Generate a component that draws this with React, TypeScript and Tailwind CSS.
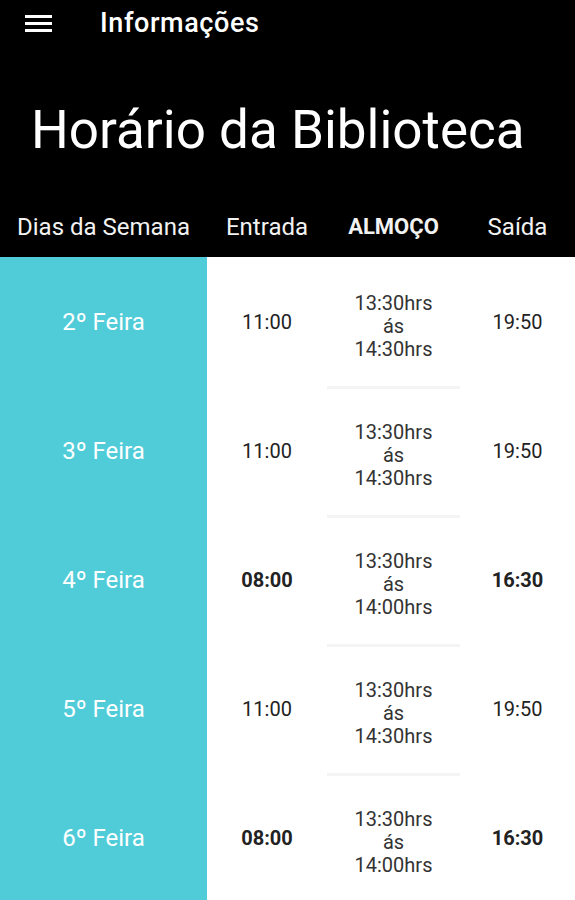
import React from "react";

const rows = [
  { dia: "2º Feira", entrada: "11:00", fim: "14:30hrs", saida: "19:50", bold: false },
  { dia: "3º Feira", entrada: "11:00", fim: "14:30hrs", saida: "19:50", bold: false },
  { dia: "4º Feira", entrada: "08:00", fim: "14:00hrs", saida: "16:30", bold: true },
  { dia: "5º Feira", entrada: "11:00", fim: "14:30hrs", saida: "19:50", bold: false },
  { dia: "6º Feira", entrada: "08:00", fim: "14:00hrs", saida: "16:30", bold: true },
];

export default function App() {
  return (
    <div className="w-[575px] h-[900px] overflow-hidden bg-white flex flex-col" style={{ fontFamily: "Roboto, 'Liberation Sans', sans-serif" }}>
      <div className="bg-black text-white shrink-0">
        <div className="h-[46px] flex items-center">
          <div className="w-[100px] pl-[25px]">
            <svg width="28" height="18" viewBox="0 0 28 18">
              <rect x="0" y="1" width="27" height="3" fill="#fff" />
              <rect x="0" y="8" width="27" height="3" fill="#fff" />
              <rect x="0" y="15" width="27" height="3" fill="#fff" />
            </svg>
          </div>
          <span className="text-[27px] font-medium tracking-[0.6px]">Informações</span>
        </div>
        <div className="h-[158px] flex items-center pl-[31px] pt-[10px]">
          <h1 className="text-[53px] leading-none">Horário da Biblioteca</h1>
        </div>
        <div className="h-[53px] flex items-start pt-[5px] text-[24px] text-[#f2f2f2]">
          <div className="w-[207px] text-center">Dias da Semana</div>
          <div className="w-[120px] text-center">Entrada</div>
          <div className="w-[133px] text-center font-bold text-[22px] pt-[1px]">ALMOÇO</div>
          <div className="flex-1 text-center">Saída</div>
        </div>
      </div>
      <div className="flex flex-col">
        {rows.map((r, i) => (
          <div key={i} className="flex h-[129px]">
            <div className="w-[207px] bg-[#50ccd9] flex items-center justify-center text-white text-[24px]">
              {r.dia}
            </div>
            <div className={`w-[120px] flex items-center justify-center text-[20px] text-[#222] ${r.bold ? "font-bold" : ""}`}>
              {r.entrada}
            </div>
            <div className="w-[133px] flex flex-col">
              {i > 0 && <div className="h-[3px] bg-[#f4f4f4]" />}
              <div className={`flex-1 flex flex-col items-center justify-center text-[20px] leading-[23px] text-[#333] ${i > 0 ? "pt-[7px]" : "pt-[10px]"}`}>
                <span>13:30hrs</span>
                <span>ás</span>
                <span>{r.fim}</span>
              </div>
            </div>
            <div className={`flex-1 flex items-center justify-center text-[20px] text-[#222] ${r.bold ? "font-bold" : ""}`}>
              {r.saida}
            </div>
          </div>
        ))}
      </div>
    </div>
  );
}
